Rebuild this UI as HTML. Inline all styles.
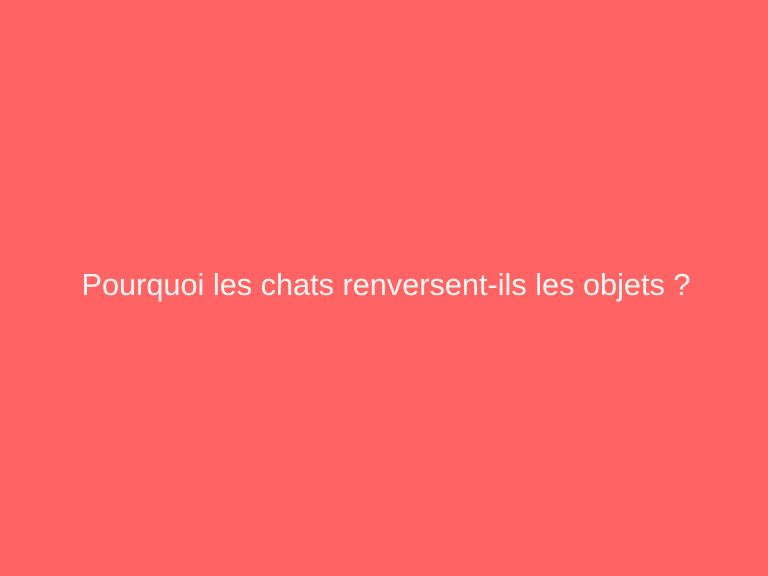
<!DOCTYPE html>
<html><head><style>
html,body{margin:0;padding:0;}
body{width:768px;height:576px;background:#ff6363;position:relative;overflow:hidden;}
.t{position:absolute;left:2px;width:768px;top:265px;text-align:center;font-family:"Liberation Sans",sans-serif;font-size:30.7px;line-height:40px;color:#fff6f3;}
</style></head><body>
<div class="t">Pourquoi les chats renversent-ils les objets ?</div>
</body></html>
